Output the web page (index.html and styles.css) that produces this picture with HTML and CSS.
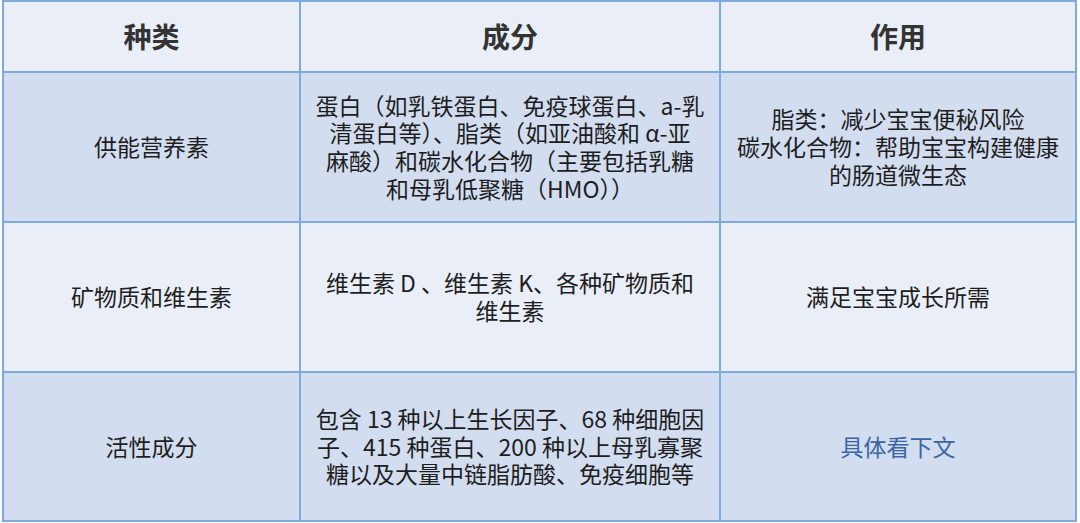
FILE: index.html
```html
<!DOCTYPE html>
<html lang="zh">
<head>
<meta charset="utf-8">
<title>母乳成分</title>
<link rel="stylesheet" href="styles.css">
</head>
<body>
<table class="grid">
  <colgroup>
    <col class="c1">
    <col class="c2">
    <col class="c3">
  </colgroup>
  <thead>
    <tr class="head">
      <th>种类</th>
      <th>成分</th>
      <th>作用</th>
    </tr>
  </thead>
  <tbody>
    <tr class="row dark r1">
      <td>供能营养素</td>
      <td>蛋白（如乳铁蛋白、免疫球蛋白、a-乳<br>清蛋白等）、脂类（如亚油酸和 α-亚<br>麻酸）和碳水化合物（主要包括乳糖<br>和母乳低聚糖（HMO））</td>
      <td>脂类：减少宝宝便秘风险<br>碳水化合物：帮助宝宝构建健康<br>的肠道微生态</td>
    </tr>
    <tr class="row light r2">
      <td>矿物质和维生素</td>
      <td>维生素 D 、维生素 K、各种矿物质和<br>维生素</td>
      <td>满足宝宝成长所需</td>
    </tr>
    <tr class="row dark r3">
      <td>活性成分</td>
      <td>包含 13 种以上生长因子、68 种细胞因<br>子、415 种蛋白、200 种以上母乳寡聚<br>糖以及大量中链脂肪酸、免疫细胞等</td>
      <td class="link">具体看下文</td>
    </tr>
  </tbody>
</table>
</body>
</html>
```

FILE: styles.css
```css
html, body {
  margin: 0;
  padding: 0;
  background: #ffffff;
}

body {
  padding: 0 0 0 2px;
  font-family: "Noto Sans CJK SC", "Noto Sans", sans-serif;
  color: #1e1e1e;
}

.grid {
  table-layout: fixed;
  border-collapse: separate;
  border-spacing: 0;
  width: 1075px;
  border-top: 2px solid #7eaadd;
  border-left: 2px solid #7eaadd;
}

.c1 { width: 297px; }
.c2 { width: 420px; }
.c3 { width: 356px; }

.grid th,
.grid td {
  box-sizing: border-box;
  padding: 0 4px;
  border-right: 2px solid #7eaadd;
  border-bottom: 2px solid #7eaadd;
  text-align: center;
  vertical-align: middle;
}

.head th {
  height: 71px;
  background: #e9eef7;
  font-size: 28px;
  line-height: 34px;
  font-weight: 700;
  color: #333333;
  padding-bottom: 2px;
}

.row td {
  font-size: 23px;
  line-height: 27.7px;
  font-weight: 400;
}

.r1 td, .r2 td { height: 150px; }
.r3 td { height: 149px; }

.dark td { background: #d2ddef; }
.light td { background: #e9eef7; }

.link { color: #3b64a3; }
```
